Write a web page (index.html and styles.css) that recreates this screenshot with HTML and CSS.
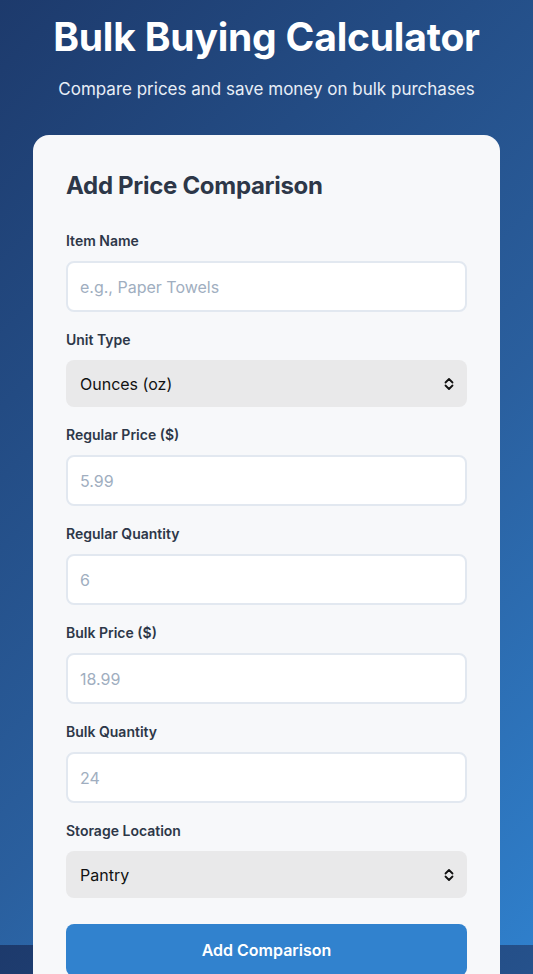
FILE: index.html
```html
<!DOCTYPE html>
<html lang="en">

<head>
    <meta charset="UTF-8">
    <meta name="viewport" content="width=device-width, initial-scale=1.0">
    <title>Bulk Buying Calculator</title>
    <link rel="stylesheet" href="styles.css">
</head>

<body>
    <div class="container">
        <header class="header">
            <h1>Bulk Buying Calculator</h1>
            <p>Compare prices and save money on bulk purchases</p>
        </header>

        <form class="card" id="compare-form">
            <h2>Add Price Comparison</h2>

            <div class="form-group">
                <label for="item-name">Item Name</label>
                <input type="text" id="item-name" placeholder="e.g., Paper Towels">
            </div>

            <div class="form-group">
                <label for="unit-type">Unit Type</label>
                <div class="select-wrap">
                    <select id="unit-type">
                        <option>Ounces (oz)</option>
                        <option>Pounds (lb)</option>
                        <option>Count</option>
                        <option>Liters (L)</option>
                    </select>
                    <svg class="select-arrow" width="12" height="14" viewBox="0 0 12 14">
                        <path d="M2.5 5.5 L6 2 L9.5 5.5 M2.5 8.5 L6 12 L9.5 8.5" fill="none" stroke="#111" stroke-width="1.8" stroke-linecap="round" stroke-linejoin="round" />
                    </svg>
                </div>
            </div>

            <div class="form-group">
                <label for="regular-price">Regular Price ($)</label>
                <input type="number" id="regular-price" placeholder="5.99">
            </div>

            <div class="form-group">
                <label for="regular-qty">Regular Quantity</label>
                <input type="number" id="regular-qty" placeholder="6">
            </div>

            <div class="form-group">
                <label for="bulk-price">Bulk Price ($)</label>
                <input type="number" id="bulk-price" placeholder="18.99">
            </div>

            <div class="form-group">
                <label for="bulk-qty">Bulk Quantity</label>
                <input type="number" id="bulk-qty" placeholder="24">
            </div>

            <div class="form-group">
                <label for="storage">Storage Location</label>
                <div class="select-wrap">
                    <select id="storage">
                        <option>Pantry</option>
                        <option>Garage</option>
                        <option>Basement</option>
                        <option>Freezer</option>
                    </select>
                    <svg class="select-arrow" width="12" height="14" viewBox="0 0 12 14">
                        <path d="M2.5 5.5 L6 2 L9.5 5.5 M2.5 8.5 L6 12 L9.5 8.5" fill="none" stroke="#111" stroke-width="1.8" stroke-linecap="round" stroke-linejoin="round" />
                    </svg>
                </div>
            </div>

            <button type="submit" class="add-btn">Add Comparison</button>
        </form>
    </div>
</body>

</html>
```

FILE: styles.css
```css
* {
    box-sizing: border-box;
}

html {
    background: linear-gradient(135deg, #1d3a6c 0%, #2a5f9e 60%, #2f7fcb 100%);
    background-size: 100% 945px;
    background-repeat: repeat-y;
}

body {
    margin: 0;
    font-family: Inter, 'Noto Sans', sans-serif;
    color: #2d3748;
}

.container {
    max-width: 600px;
    margin: 0 auto;
    padding: 13px 33px 40px;
}

.header {
    text-align: center;
    color: #fff;
    margin-bottom: 34px;
}

.header h1 {
    margin: 0;
    font-size: 39px;
    font-weight: 700;
    line-height: 48px;
    letter-spacing: -0.2px;
}

.header p {
    margin: 16px 0 0;
    font-size: 17px;
    line-height: 24px;
    color: #e8eef7;
}

.card {
    background-color: #f7f8fa;
    border-radius: 16px;
    padding: 33px 33px 40px;
}

.card h2 {
    margin: 3px 0 30px;
    font-size: 24px;
    font-weight: 700;
    line-height: 30px;
    color: #2d3748;
    letter-spacing: -0.3px;
}

.form-group {
    margin-bottom: 18px;
}

.form-group label {
    display: block;
    font-size: 14px;
    font-weight: 600;
    line-height: 20px;
    margin-bottom: 10px;
    color: #2d3748;
}

.form-group input {
    display: block;
    width: 100%;
    height: 51px;
    padding: 0 12px;
    font-family: inherit;
    font-size: 16px;
    color: #2d3748;
    background-color: #fff;
    border: 2px solid #e2e8f0;
    border-radius: 8px;
    outline: none;
    -moz-appearance: textfield;
}

.form-group input::placeholder {
    color: #a0aec0;
}

.form-group input::-webkit-outer-spin-button,
.form-group input::-webkit-inner-spin-button {
    -webkit-appearance: none;
    margin: 0;
}

.select-wrap {
    position: relative;
}

.select-wrap select {
    display: block;
    width: 100%;
    height: 47px;
    padding: 0 14px;
    font-family: inherit;
    font-size: 16px;
    color: #111;
    background-color: #e9e9ea;
    border: none;
    border-radius: 8px;
    -webkit-appearance: none;
    appearance: none;
}

.select-arrow {
    position: absolute;
    right: 12px;
    top: 17px;
    pointer-events: none;
}

.add-btn {
    display: block;
    width: 100%;
    height: 52px;
    margin-top: 26px;
    font-family: inherit;
    font-size: 16px;
    font-weight: 600;
    color: #fff;
    background-color: #3182ce;
    border: none;
    border-radius: 8px;
    cursor: pointer;
}
```
